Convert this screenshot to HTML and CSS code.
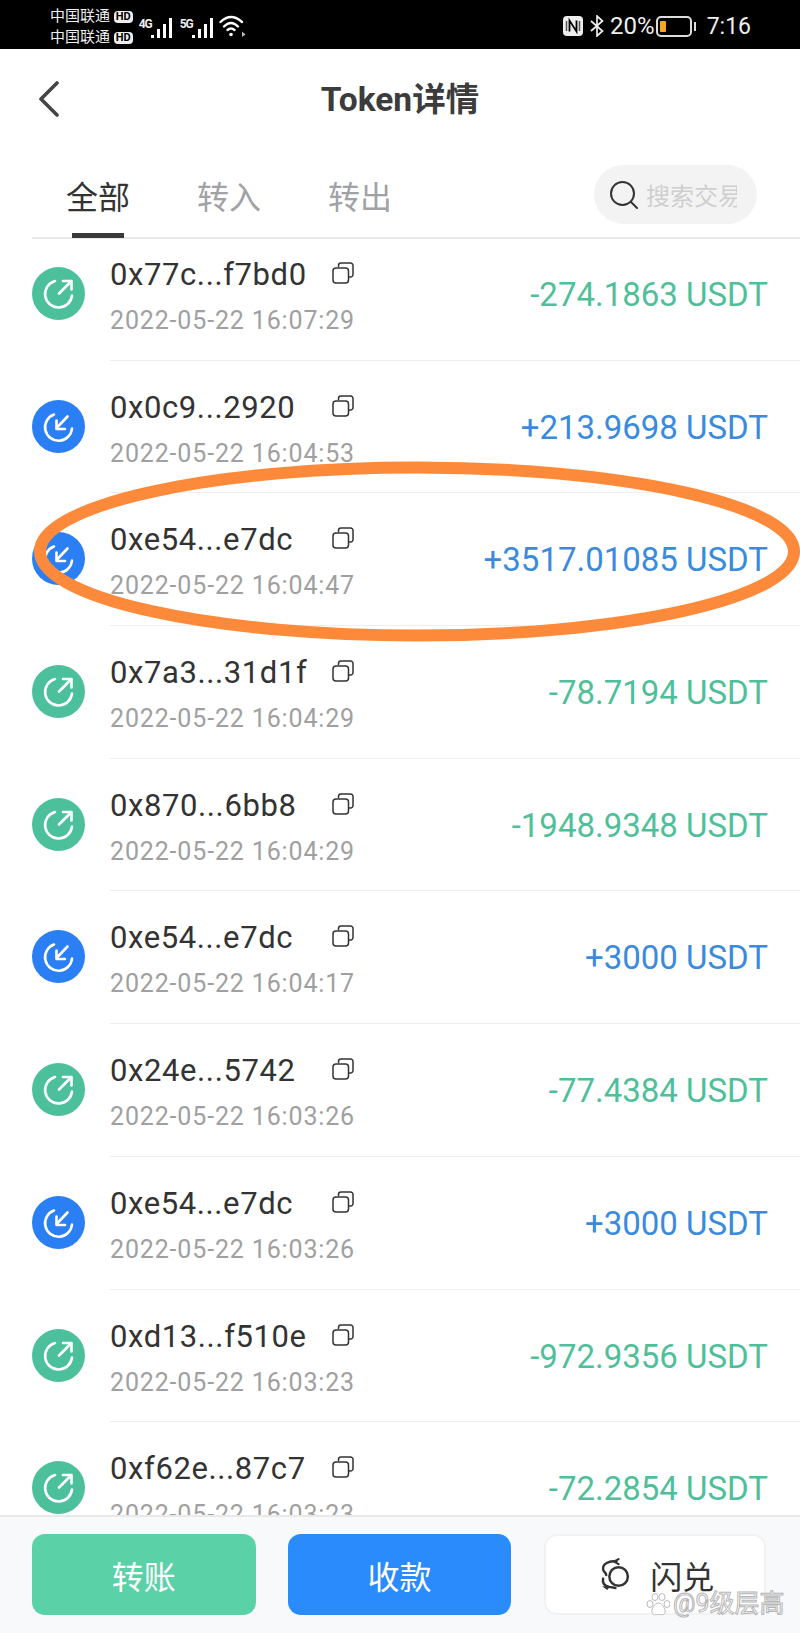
FILE: index.html
```html
<!DOCTYPE html>
<html lang="zh-CN">
<head>
    <meta charset="UTF-8">
    <meta name="viewport" content="width=device-width, initial-scale=1.0">
    <title>Token详情</title>
    <link rel="stylesheet" href="styles.css">
</head>
<body>

    <!-- Shared icons -->
    <svg class="sprites" width="0" height="0">
        <symbol id="icon-out" viewBox="0 0 53 53">
            <circle cx="26.5" cy="26.5" r="26.5" fill="#4cc09a"/>
            <g fill="none" stroke="#fff" stroke-width="2.6" stroke-linecap="round" stroke-linejoin="round">
                <path d="M23 14 A13.5 13.5 0 1 0 40 28.5"/>
                <path d="M27 26.5 L38.5 15"/>
                <path d="M31 14 H39.5 V22.5"/>
            </g>
        </symbol>
        <symbol id="icon-in" viewBox="0 0 53 53">
            <circle cx="26.5" cy="26.5" r="26.5" fill="#2a7ff5"/>
            <g fill="none" stroke="#fff" stroke-width="2.6" stroke-linecap="round" stroke-linejoin="round">
                <path d="M22 14.5 A13.5 13.5 0 1 0 40 28.5"/>
                <path d="M35.5 16.5 L25 27.5"/>
                <path d="M24.5 20.5 V29 H33"/>
            </g>
        </symbol>
        <symbol id="icon-copy" viewBox="0 0 22 22">
            <g fill="none" stroke="#333" stroke-width="1.5" stroke-linejoin="round">
                <path d="M6.5 5 V3.5 A2.5 2.5 0 0 1 9 1 H18.5 A2.5 2.5 0 0 1 21 3.5 V12.5 A2.5 2.5 0 0 1 18.5 15 H16.5"/>
                <rect x="1" y="6" width="15.5" height="15" rx="3"/>
            </g>
        </symbol>
    </svg>

    <div class="page">

        <!-- Status bar -->
        <div class="statusbar">
            <div class="carriers">
                <div class="carrier">中国联通 <span class="hd">HD</span></div>
                <div class="carrier">中国联通 <span class="hd">HD</span></div>
            </div>
            <div class="signal">
                <span class="net">4G</span>
                <svg width="22" height="21" viewBox="0 0 22 21" fill="#fff"><rect x="0" y="17" width="3" height="3"/><rect x="6" y="11" width="3" height="9"/><rect x="12" y="6" width="3" height="14"/><rect x="18" y="0" width="3" height="20"/></svg>
            </div>
            <div class="signal">
                <span class="net">5G</span>
                <svg width="22" height="21" viewBox="0 0 22 21" fill="#fff"><rect x="0" y="17" width="3" height="3"/><rect x="6" y="11" width="3" height="9"/><rect x="12" y="6" width="3" height="14"/><rect x="18" y="0" width="3" height="20"/></svg>
            </div>
            <svg class="wifi" width="27" height="22" viewBox="0 0 27 22" fill="none" stroke="#fff" stroke-width="2.4" stroke-linecap="round"><path d="M1.5 7 Q12 -3 23 7"/><path d="M5 11.5 Q12 4.500 19 11.5"/><path d="M8.500 15 Q12 12 15.500 15"/><circle cx="12" cy="19.500" r="1.800" fill="#fff" stroke="none"/><path d="M23 16.500 L26.500 19.500 L23 22 Z" fill="#bbb" stroke="none"/></svg>
            <div class="status-right">
                <svg width="20" height="20" viewBox="0 0 20 20"><rect width="20" height="20" rx="4" fill="#eee"/><path d="M3.500 5 V15 M16.500 5 V15" stroke="#555" stroke-width="1.500"/><path d="M6.500 15.500 V4.500 L13.500 15.500 V4.500" fill="none" stroke="#000" stroke-width="1.800"/></svg>
                <svg class="bt" width="14" height="22" viewBox="0 0 14 22" fill="none" stroke="#eee" stroke-width="1.7"><path d="M1 6 L12.500 16 L7 21 V1 L12.500 6 L1 16"/></svg>
                <span class="percent">20%</span>
                <div class="battery"><div class="battery-fill"></div></div>
                <div class="battery-cap"></div>
                <span class="clock">7:16</span>
            </div>
        </div>

        <!-- Title -->
        <div class="titlebar">
            <svg class="back" width="22" height="36" viewBox="0 0 22 36" fill="none" stroke="#444" stroke-width="3.6" stroke-linecap="round" stroke-linejoin="round"><path d="M19 2 L3 18 L19 34"/></svg>
            <h1>Token详情</h1>
        </div>

        <!-- Tabs -->
        <div class="tabs">
            <div class="tab active">全部</div>
            <div class="tab">转入</div>
            <div class="tab">转出</div>
            <div class="search">
                <svg width="28" height="28" viewBox="0 0 28 28" fill="none" stroke="#333" stroke-width="2" stroke-linecap="round"><circle cx="12.500" cy="12.500" r="11.500"/><path d="M21 21 L27 27"/></svg>
                <span class="search-text">搜索交易</span>
            </div>
        </div>

        <!-- Transactions -->
        <div class="list">
            <div class="list-inner">
                <div class="row">
                    <svg class="dir"><use href="#icon-out"/></svg>
                    <div class="info">
                        <div class="addr-line"><span class="addr">0x77c...f7bd0</span><svg class="copy"><use href="#icon-copy"/></svg></div>
                        <div class="time">2022-05-22 16:07:29</div>
                    </div>
                    <div class="amount out">-274.1863 USDT</div>
                </div>
                <div class="row">
                    <svg class="dir"><use href="#icon-in"/></svg>
                    <div class="info">
                        <div class="addr-line"><span class="addr">0x0c9...2920</span><svg class="copy"><use href="#icon-copy"/></svg></div>
                        <div class="time">2022-05-22 16:04:53</div>
                    </div>
                    <div class="amount in">+213.9698 USDT</div>
                </div>
                <div class="row">
                    <svg class="dir"><use href="#icon-in"/></svg>
                    <div class="info">
                        <div class="addr-line"><span class="addr">0xe54...e7dc</span><svg class="copy"><use href="#icon-copy"/></svg></div>
                        <div class="time">2022-05-22 16:04:47</div>
                    </div>
                    <div class="amount in">+3517.01085 USDT</div>
                </div>
                <div class="row">
                    <svg class="dir"><use href="#icon-out"/></svg>
                    <div class="info">
                        <div class="addr-line"><span class="addr">0x7a3...31d1f</span><svg class="copy"><use href="#icon-copy"/></svg></div>
                        <div class="time">2022-05-22 16:04:29</div>
                    </div>
                    <div class="amount out">-78.7194 USDT</div>
                </div>
                <div class="row">
                    <svg class="dir"><use href="#icon-out"/></svg>
                    <div class="info">
                        <div class="addr-line"><span class="addr">0x870...6bb8</span><svg class="copy"><use href="#icon-copy"/></svg></div>
                        <div class="time">2022-05-22 16:04:29</div>
                    </div>
                    <div class="amount out">-1948.9348 USDT</div>
                </div>
                <div class="row">
                    <svg class="dir"><use href="#icon-in"/></svg>
                    <div class="info">
                        <div class="addr-line"><span class="addr">0xe54...e7dc</span><svg class="copy"><use href="#icon-copy"/></svg></div>
                        <div class="time">2022-05-22 16:04:17</div>
                    </div>
                    <div class="amount in">+3000 USDT</div>
                </div>
                <div class="row">
                    <svg class="dir"><use href="#icon-out"/></svg>
                    <div class="info">
                        <div class="addr-line"><span class="addr">0x24e...5742</span><svg class="copy"><use href="#icon-copy"/></svg></div>
                        <div class="time">2022-05-22 16:03:26</div>
                    </div>
                    <div class="amount out">-77.4384 USDT</div>
                </div>
                <div class="row">
                    <svg class="dir"><use href="#icon-in"/></svg>
                    <div class="info">
                        <div class="addr-line"><span class="addr">0xe54...e7dc</span><svg class="copy"><use href="#icon-copy"/></svg></div>
                        <div class="time">2022-05-22 16:03:26</div>
                    </div>
                    <div class="amount in">+3000 USDT</div>
                </div>
                <div class="row">
                    <svg class="dir"><use href="#icon-out"/></svg>
                    <div class="info">
                        <div class="addr-line"><span class="addr">0xd13...f510e</span><svg class="copy"><use href="#icon-copy"/></svg></div>
                        <div class="time">2022-05-22 16:03:23</div>
                    </div>
                    <div class="amount out">-972.9356 USDT</div>
                </div>
                <div class="row">
                    <svg class="dir"><use href="#icon-out"/></svg>
                    <div class="info">
                        <div class="addr-line"><span class="addr">0xf62e...87c7</span><svg class="copy"><use href="#icon-copy"/></svg></div>
                        <div class="time">2022-05-22 16:03:23</div>
                    </div>
                    <div class="amount out">-72.2854 USDT</div>
                </div>
            </div>
        </div>

        <!-- Bottom buttons -->
        <div class="actions">
            <div class="action send">转账</div>
            <div class="action receive">收款</div>
            <div class="action swap">
                <svg width="33" height="33" viewBox="0 0 32 32" fill="none" stroke="#333" stroke-width="2.4" stroke-linecap="round"><circle cx="19" cy="18" r="9"/><path d="M17 3.500 C10 2 3 6 4 11 C4.500 14 7 14 7 16.500"/><path d="M19 1 L14.500 3.500 L19 6" stroke-width="2"/><path d="M4 20 C3 24 5 27 10 28 L16 29"/><path d="M3 27.500 H11 L8 31 Z" fill="#333" stroke="none"/></svg>
                <span>闪兑</span>
            </div>
        </div>

        <!-- Hand drawn mark over the screenshot -->
        <svg class="oval" width="800" height="200" viewBox="0 0 800 200" fill="none"><ellipse cx="417" cy="100.500" rx="377" ry="84" stroke="#fd8a3a" stroke-width="12"/></svg>

        <!-- Watermark -->
        <div class="watermark">
            <svg width="24" height="24" viewBox="0 0 24 24" fill="#fff" stroke="#bbb" stroke-width="1"><ellipse cx="4" cy="12" rx="3" ry="3.500"/><ellipse cx="9" cy="5" rx="3" ry="3.500"/><ellipse cx="16" cy="5" rx="3" ry="3.500"/><ellipse cx="21" cy="12" rx="3" ry="3.500"/><path d="M12.500 11 C9 11 5 17 6 20.500 C7 23.500 10 22.500 12.500 22.500 C15 22.500 18 23.500 19 20.500 C20 17 16 11 12.500 11 Z"/></svg>
            <span>@9级层高</span>
        </div>

    </div>

</body>
</html>
```

FILE: styles.css
```css
* {
    box-sizing: border-box;
}
body {
    margin: 0;
    padding: 0;
    background-color: #fff;
    color: #333;
    font-family: Roboto, "Noto Sans CJK SC", sans-serif;
}
.sprites {
    position: absolute;
}
.page {
    position: relative;
    width: 800px;
    height: 1633px;
    overflow: hidden;
    display: flex;
    flex-direction: column;
}

/* Status bar */
.statusbar {
    height: 49px;
    flex-shrink: 0;
    background-color: #000;
    color: #eee;
    display: flex;
    align-items: center;
    padding-left: 50px;
    padding-right: 49px;
}
.carriers {
    display: flex;
    flex-direction: column;
    gap: 5px;
    margin-top: 3px;
}
.carrier {
    font-size: 15px;
    line-height: 16px;
    white-space: nowrap;
}
.hd {
    display: inline-block;
    background-color: #eee;
    color: #000;
    font-size: 11px;
    font-weight: 700;
    line-height: 12px;
    padding: 0 2px;
    border-radius: 4px;
    vertical-align: 1px;
}
.signal {
    display: flex;
    align-items: flex-end;
    margin-left: 6px;
    margin-top: 7px;
}
.signal + .signal {
    margin-left: 7px;
}
.net {
    font-size: 12px;
    font-weight: 700;
    align-self: flex-start;
    line-height: 12px;
    letter-spacing: -1px;
    margin-right: -1px;
}
.wifi {
    margin-left: 5px;
    margin-top: 3px;
}
.status-right {
    margin-left: auto;
    display: flex;
    align-items: center;
    margin-top: 3px;
}
.bt {
    margin-left: 7px;
}
.percent {
    font-size: 24px;
    margin-left: 6px;
}
.battery {
    width: 36px;
    height: 21px;
    border: 2px solid #ddd;
    border-radius: 5px;
    margin-left: 1px;
    padding: 3px 2px;
}
.battery-fill {
    width: 6px;
    height: 100%;
    background-color: #f5a623;
    border-radius: 1px;
}
.battery-cap {
    width: 2px;
    height: 9px;
    background-color: #ddd;
    margin-left: 2px;
}
.clock {
    font-size: 23px;
    margin-left: 11px;
}

/* Title */
.titlebar {
    height: 100px;
    flex-shrink: 0;
    display: flex;
    align-items: center;
    justify-content: center;
    padding-bottom: 6px;
    position: relative;
}
.titlebar h1 {
    margin: 0;
    font-size: 33.500px;
    font-weight: 700;
    color: #3c3c3c;
}
.back {
    position: absolute;
    left: 38px;
    top: 32px;
}

/* Tabs */
.tabs {
    height: 90px;
    flex-shrink: 0;
    margin-left: 32px;
    padding-left: 34px;
    border-bottom: 2px solid #e9e9e9;
    display: flex;
    align-items: flex-start;
    gap: 67px;
    position: relative;
}
.tab {
    width: 64px;
    font-size: 32px;
    line-height: 46px;
    margin-top: 26px;
    color: #a0a2a5;
    white-space: nowrap;
}
.tab.active {
    color: #333;
    position: relative;
}
.tab.active::after {
    content: "";
    position: absolute;
    left: 6px;
    right: 6px;
    top: 58px;
    height: 5px;
    background-color: #3a3a3a;
}
.search {
    position: absolute;
    left: 562px;
    top: 16px;
    width: 163px;
    height: 59px;
    border-radius: 30px;
    background-color: #f3f3f3;
    display: flex;
    align-items: center;
    padding-left: 16px;
    overflow: hidden;
}
.search-text {
    width: 91px;
    overflow: hidden;
    font-size: 24px;
    color: #cfcfcf;
    margin-left: 8px;
    white-space: nowrap;
}

/* Transactions */
.list {
    flex: 1;
    overflow: hidden;
    min-height: 0;
}
.list-inner {
    margin-top: -11px;
}
.row {
    height: 132.700px;
    position: relative;
    display: flex;
    align-items: flex-start;
    padding-left: 32px;
    padding-right: 32px;
}
.row::after {
    content: "";
    position: absolute;
    left: 110px;
    right: 0;
    bottom: 0;
    height: 1px;
    background-color: #eeeeee;
}
.dir {
    width: 53px;
    height: 53px;
    flex-shrink: 0;
    margin-top: 39px;
}
.info {
    width: 244px;
    margin-left: 25px;
    margin-top: 28px;
}
.addr-line {
    display: flex;
    justify-content: space-between;
    align-items: flex-start;
    height: 38px;
}
.addr {
    font-size: 31px;
    line-height: 38px;
    letter-spacing: 0.600px;
    color: #333;
    white-space: nowrap;
}
.copy {
    width: 22px;
    height: 22px;
    flex-shrink: 0;
    margin-top: 6px;
}
.time {
    font-size: 25px;
    line-height: 32px;
    letter-spacing: 0.850px;
    color: #a0a0a0;
    margin-top: 11px;
    white-space: nowrap;
}
.amount {
    margin-left: auto;
    margin-top: 47px;
    font-size: 33px;
    line-height: 40px;
    white-space: nowrap;
}
.amount.out {
    color: #4fbf9a;
}
.amount.in {
    color: #3a8ade;
}

/* Bottom buttons */
.actions {
    height: 118px;
    flex-shrink: 0;
    background-color: #f8f9fa;
    border-top: 2px solid #e9e9e9;
    display: flex;
    gap: 32px;
    padding: 17px 34px 0 32px;
    position: relative;
}
.action {
    width: 224px;
    height: 81px;
    border-radius: 13px;
    font-size: 32px;
    display: flex;
    align-items: center;
    justify-content: center;
    color: #fff;
}
.send {
    background-color: #5bd1a8;
}
.receive {
    background-color: #2a8bfd;
}
.swap {
    width: 222px;
    margin-left: 1px;
    padding-left: 3px;
    background-color: #fff;
    border: 2px solid #f1f2f4;
    color: #333;
    gap: 18px;
}

/* Overlays */
.oval {
    position: absolute;
    left: 0;
    top: 451px;
}
.watermark {
    position: absolute;
    left: 646px;
    top: 1590px;
    display: flex;
    align-items: center;
    gap: 3px;
    font-size: 25px;
    line-height: 28px;
    color: #fff;
    -webkit-text-stroke: 1px #b5b5b5;
    white-space: nowrap;
}
```
